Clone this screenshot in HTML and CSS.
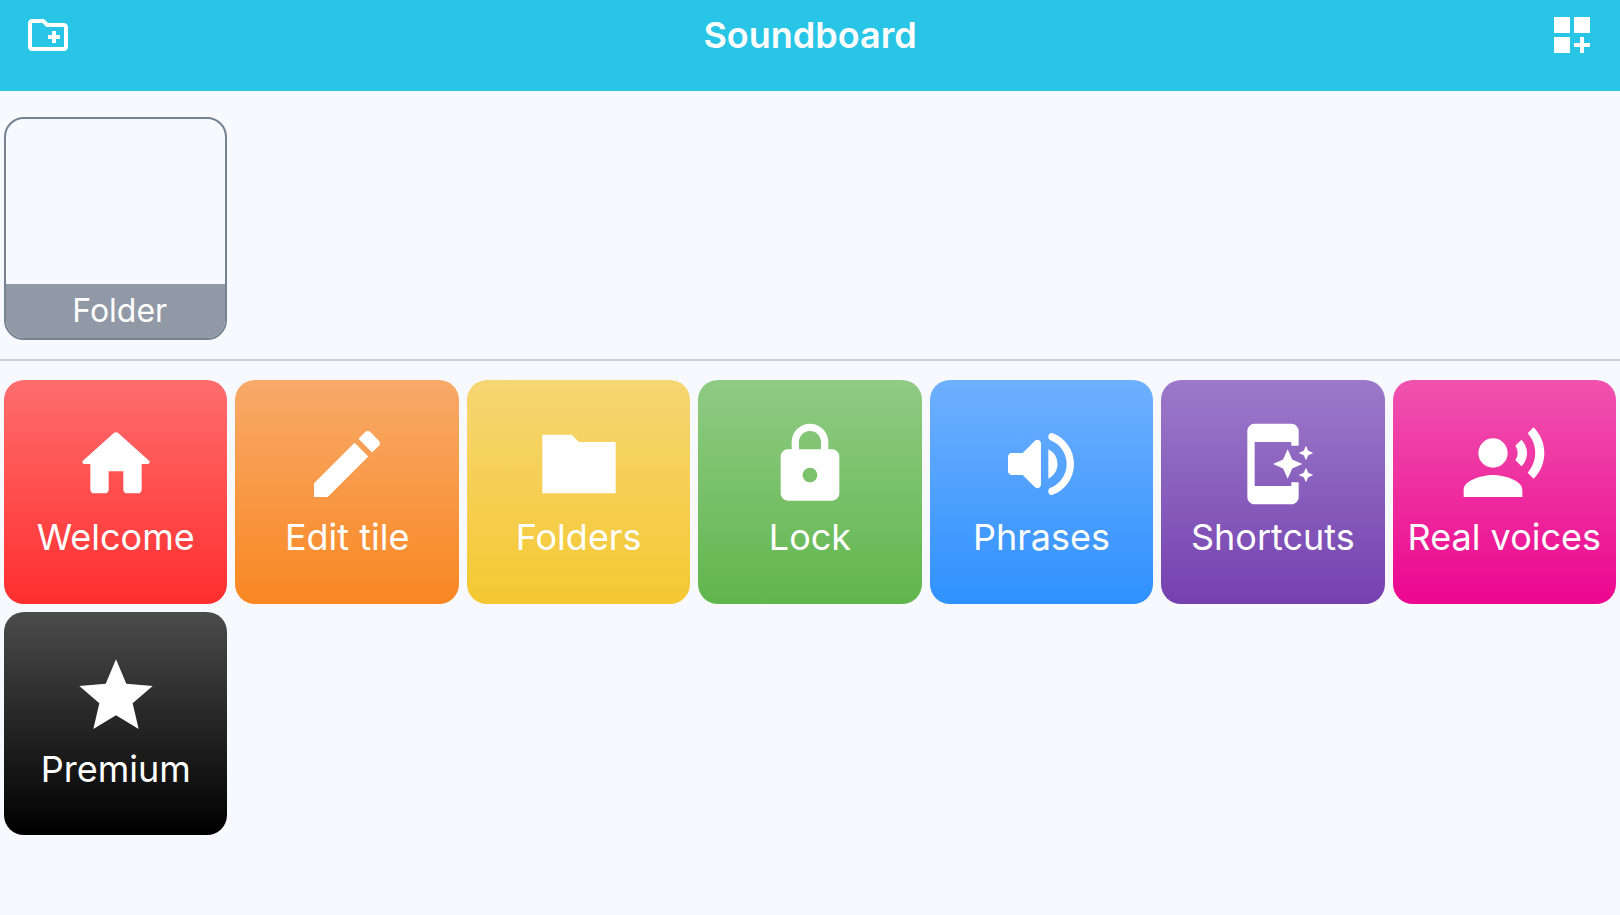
FILE: index.html
```html
<!DOCTYPE html>
<html lang="en">
<head>
<meta charset="utf-8">
<meta name="viewport" content="width=device-width, initial-scale=1">
<title>Soundboard</title>
<link rel="stylesheet" href="styles.css">
</head>
<body>
<header class="toolbar">
  <button class="toolbar-button" type="button" aria-label="New folder">
    <svg viewBox="0 0 24 24" aria-hidden="true"><path d="M20 6h-8l-2-2H4c-1.11 0-2 .89-2 2v12c0 1.11.89 2 2 2h16c1.11 0 2-.89 2-2V8c0-1.11-.89-2-2-2zm0 12H4V6h5.17l2 2H20v10zm-8-4h2v2h2v-2h2v-2h-2v-2h-2v2h-2z"/></svg>
  </button>
  <h1 class="title">Soundboard</h1>
  <button class="toolbar-button" type="button" aria-label="New tile">
    <svg viewBox="0 0 24 24" aria-hidden="true"><path d="M3 3h8v8H3zM13 3h8v8h-8zM3 13h8v8H3zM18 13h-2v3h-3v2h3v3h2v-3h3v-2h-3z"/></svg>
  </button>
</header>
<main>
  <section class="grid folders" aria-label="Folders">
    <button class="folder" type="button"><span class="folder-label">Folder</span></button>
  </section>
  <section class="grid tiles" aria-label="Tiles">
    <button class="tile red" type="button">
      <svg viewBox="0 0 24 24" aria-hidden="true"><path d="M10 19v-5h4v5c0 .55.45 1 1 1h3c.55 0 1-.45 1-1v-7h1.7c.46 0 .68-.57.33-.87L12.67 3.6c-.38-.34-.96-.34-1.34 0l-8.36 7.53c-.34.3-.13.87.33.87H5v7c0 .55.45 1 1 1h3c.55 0 1-.45 1-1z"/></svg>
      <span>Welcome</span>
    </button>
    <button class="tile orange" type="button">
      <svg viewBox="0 0 24 24" aria-hidden="true"><path d="M20.71 7.04c.39-.39.39-1.04 0-1.41l-2.34-2.34c-.37-.39-1.02-.39-1.41 0l-1.84 1.83 3.75 3.75M3 17.25V21h3.75L17.81 9.93l-3.75-3.75z"/></svg>
      <span>Edit tile</span>
    </button>
    <button class="tile yellow" type="button">
      <svg viewBox="0 0 24 24" aria-hidden="true"><path d="M12 6l-2-2H2v16h20V6z"/></svg>
      <span>Folders</span>
    </button>
    <button class="tile green" type="button">
      <svg viewBox="0 0 24 24" aria-hidden="true"><path fill-rule="evenodd" d="M18 8h-1V6c0-2.76-2.24-5-5-5S7 3.24 7 6v2H6c-1.1 0-2 .9-2 2v10c0 1.1.9 2 2 2h12c1.1 0 2-.9 2-2V10c0-1.1-.9-2-2-2zM12 17c-1.1 0-2-.9-2-2s.9-2 2-2 2 .9 2 2-.9 2-2 2zM9 8V6c0-1.66 1.34-3 3-3s3 1.34 3 3v2z"/></svg>
      <span>Lock</span>
    </button>
    <button class="tile blue" type="button">
      <svg viewBox="0 0 24 24" aria-hidden="true"><path d="M3 10v4c0 .55.45 1 1 1h3l3.29 3.29c.63.63 1.71.18 1.71-.71V6.41c0-.89-1.08-1.34-1.71-.71L7 9H4c-.55 0-1 .45-1 1zm13.5 2A4.5 4.5 0 0 0 14 7.97v8.05c1.48-.73 2.5-2.25 2.5-4.02zM14 4.45v.2c0 .38.25.71.6.85C17.18 6.53 19 9.06 19 12s-1.82 5.47-4.4 6.5c-.36.14-.6.47-.6.85v.2c0 .63.63 1.07 1.21.85C18.6 19.11 21 15.84 21 12s-2.4-7.11-5.79-8.4c-.58-.23-1.21.22-1.21.85z"/></svg>
      <span>Phrases</span>
    </button>
    <button class="tile purple" type="button">
      <svg viewBox="0 0 24 24" aria-hidden="true"><path d="M17 18H7V6h10v1h2V3c0-1.1-.9-2-2-2H7c-1.1 0-2 .9-2 2v18c0 1.1.9 2 2 2h10c1.1 0 2-.9 2-2v-4h-2zM20.38 9.62L21 11l.62-1.38L23 9l-1.38-.62L21 7l-.62 1.38L19 9zM16 8l-1.25 2.75L12 12l2.75 1.25L16 16l1.25-2.75L20 12l-2.75-1.25zM21 13l-.62 1.38L19 15l1.38.62L21 17l.62-1.38L23 15l-1.38-.62z"/></svg>
      <span>Shortcuts</span>
    </button>
    <button class="tile pink" type="button">
      <svg viewBox="0 0 24 24" aria-hidden="true"><circle cx="9" cy="9" r="4"/><path d="M9 15c-2.67 0-8 1.34-8 4v2h16v-2c0-2.66-5.33-4-8-4zM16.76 5.36l-1.68 1.69c.84 1.18.84 2.71 0 3.89l1.68 1.69c2.02-2.02 2.02-5.07 0-7.27zM20.07 2l-1.63 1.63c2.77 3.02 2.77 7.56 0 10.74L20.07 16c3.9-3.89 3.91-9.95 0-14z"/></svg>
      <span>Real voices</span>
    </button>
    <button class="tile black" type="button">
      <svg viewBox="0 0 24 24" aria-hidden="true"><path d="M12 17.27L18.18 21l-1.64-7.03L22 9.24l-7.19-.61L12 2 9.19 8.63 2 9.24l5.46 4.73L5.82 21z"/></svg>
      <span>Premium</span>
    </button>
  </section>
</main>
</body>
</html>
```
FILE: styles.css
```css
* {
  box-sizing: border-box;
}

body {
  margin: 0;
  background: #f8f9fe;
  font-family: Inter, "Liberation Sans", sans-serif;
}

button {
  margin: 0;
  padding: 0;
  border: 0;
  background: none;
  color: #fff;
  font: inherit;
  cursor: pointer;
}

svg {
  display: block;
  fill: currentColor;
}

.toolbar {
  display: flex;
  align-items: center;
  justify-content: space-between;
  padding: 11px 24px 32px;
  background: #28c5e6;
  color: #fff;
}

.toolbar-button svg {
  width: 48px;
  height: 48px;
}

.title {
  margin: 0;
  font-size: 36px;
  font-weight: 600;
  line-height: 48px;
}

.grid {
  display: grid;
  grid-template-columns: repeat(7, 1fr);
  gap: 8px;
  padding: 19px 4px;
}

.folders {
  padding-top: 26px;
  border-bottom: 2px solid #cbced6;
}

.folder {
  display: flex;
  align-items: flex-end;
  aspect-ratio: 1;
  overflow: hidden;
  border: 2px solid #758292;
  border-radius: 20px;
}

.folder-label {
  flex: 1;
  padding-left: 8px;
  background: #9099a5;
  font-size: 32px;
  font-weight: 400;
  line-height: 54px;
}

.tile {
  display: flex;
  flex-direction: column;
  align-items: center;
  justify-content: center;
  aspect-ratio: 1;
  min-width: 0;
  padding-top: 2px;
  border-radius: 20px;
  font-size: 36px;
  font-weight: 400;
  line-height: 58px;
  white-space: nowrap;
}

.tile svg {
  width: 88px;
  height: 88px;
}

.red { background: linear-gradient(#ff6d6d, #ff2e2e); }
.orange { background: linear-gradient(#f8aa69, #f98722); }
.yellow { background: linear-gradient(#f6d674, #f5c831); }
.green { background: linear-gradient(#8fcb84, #61b64d); }
.blue { background: linear-gradient(#6eb0ff, #2f91ff); }
.purple { background: linear-gradient(#9c7aca, #7541af); }
.pink { background: linear-gradient(#f052af, #ec078f); }
.black { background: linear-gradient(#4b4b4c, #000); }
```
